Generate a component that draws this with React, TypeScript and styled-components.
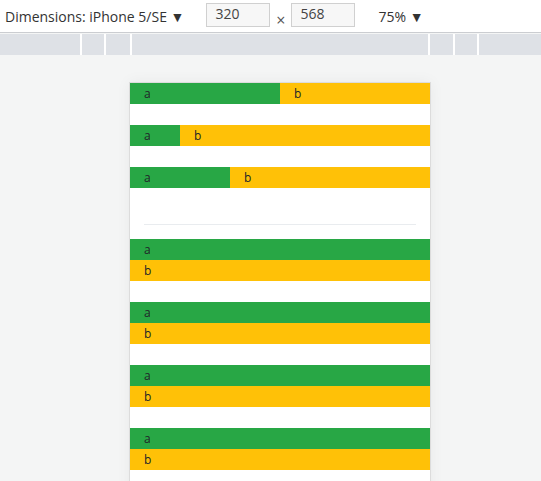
import React from "react";
import styled, { createGlobalStyle } from "styled-components";

const Global = createGlobalStyle`
  html, body { margin: 0; padding: 0; }
  body { font-family: "Open Sans", "Noto Sans", sans-serif; background: #f4f5f5; overflow: hidden; }
  #root { height: 481px; overflow: hidden; }
`;

const Page = styled.div`
  display: flex;
  flex-direction: column;
  height: 481px;
  overflow: hidden;
`;

const Toolbar = styled.div`
  flex: none;
  height: 32px;
  display: flex;
  align-items: center;
  background: #fff;
  border-bottom: 1px solid #cbcdd1;
  padding-left: 5px;
  font-size: 14px;
  color: #333;
  box-sizing: content-box;
`;

const Label = styled.span`
  margin-right: 22px;
  white-space: nowrap;
`;

const NumInput = styled.div`
  width: 54px;
  height: 22px;
  padding-left: 8px;
  border: 1px solid #d0d0d0;
  background: #f7f7f7;
  color: #444;
  font-size: 14px;
  line-height: 20px;
  margin-top: -3px;
`;

const Times = styled.span`
  width: 21px;
  text-align: center;
  font-size: 16px;
  line-height: 16px;
  color: #555;
  align-self: flex-end;
  margin-bottom: 4px;
`;

const Zoom = styled.span`
  margin-left: 23px;
  white-space: nowrap;
`;

const Ruler = styled.div`
  flex: none;
  margin-top: 1px;
  height: 21px;
  display: flex;
  gap: 2px;
  background: #fff;
`;

const RulerSeg = styled.div<{ $w?: number }>`
  background: #dee1e6;
  ${(p) => (p.$w ? `width: ${p.$w}px;` : "flex: 1;")}
`;

const Stage = styled.div`
  flex: 1;
  min-height: 0;
  display: flex;
  align-items: flex-start;
  padding-top: 27px;
  padding-left: 129px;
`;

const Device = styled.div`
  width: 300px;
  height: 426px;
  flex: none;
  background: #fff;
  border: 1px solid #dcdcdc;
  box-shadow: 0 0 14px rgba(0, 0, 0, 0.05);
  display: flex;
  flex-direction: column;
  overflow: hidden;
`;

const Bar = styled.div`
  display: flex;
  flex: none;
  height: 21px;
  margin-bottom: 21px;
`;

const Seg = styled.div<{ $tone: "a" | "b"; $grow?: boolean }>`
  background: ${(p) => (p.$tone === "a" ? "#28a745" : "#ffc107")};
  color: #212529;
  font-size: 12px;
  line-height: 21px;
  height: 21px;
  padding-left: 14px;
  box-sizing: border-box;
  ${(p) => (p.$grow ? "flex: 1;" : "")}
`;

const Divider = styled.hr`
  flex: none;
  border: 0;
  border-top: 1px solid #e9ecef;
  margin: 15px 14px 14px;
`;

const Stack = styled.div`
  display: flex;
  flex-direction: column;
  margin-bottom: 21px;
  flex: none;
`;

const bars = [50, 100 / 6, 100 / 3];

export default function App() {
  return (
    <Page>
      <Global />
      <Toolbar>
        <Label>Dimensions: iPhone 5/SE ▼</Label>
        <NumInput>320</NumInput>
        <Times>×</Times>
        <NumInput>568</NumInput>
        <Zoom>75% ▼</Zoom>
      </Toolbar>
      <Ruler>
        <RulerSeg $w={80} />
        <RulerSeg $w={22} />
        <RulerSeg $w={24} />
        <RulerSeg $w={296} />
        <RulerSeg $w={23} />
        <RulerSeg $w={22} />
        <RulerSeg />
      </Ruler>
      <Stage>
        <Device>
          {bars.map((w, i) => (
            <Bar key={i}>
              <Seg $tone="a" style={{ width: `${w}%` }}>a</Seg>
              <Seg $tone="b" $grow>b</Seg>
            </Bar>
          ))}
          <Divider />
          {[0, 1, 2, 3].map((i) => (
            <Stack key={i}>
              <Seg $tone="a">a</Seg>
              <Seg $tone="b">b</Seg>
            </Stack>
          ))}
        </Device>
      </Stage>
    </Page>
  );
}
